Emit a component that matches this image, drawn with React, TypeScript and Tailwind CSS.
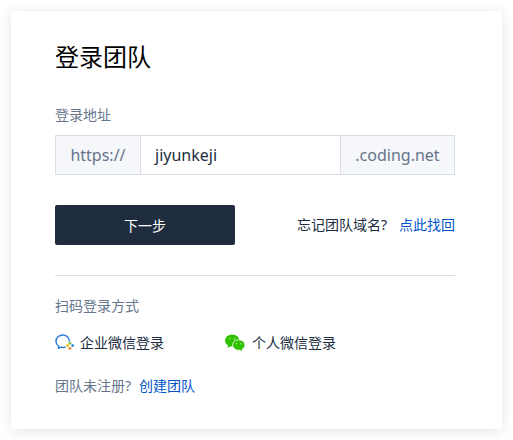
export default function App() {
  return (
    <div className="w-[513px] h-[440px] bg-white p-[11px] text-[14px] font-['Noto_Sans','Noto_Sans_CJK_SC',sans-serif] text-[#202d40]">
      <div className="w-[491px] h-[418px] bg-white pl-[44px] pr-[47px] pt-[28px] shadow-[0_2px_12px_rgba(32,45,64,0.12)]">
        <h1 className="text-[24px] leading-[36px] font-normal text-black">登录团队</h1>
        <div className="mt-[30px] h-[20px] leading-[20px] text-[#66758c]">登录地址</div>
        <div className="mt-[10px] flex h-[40px] w-[400px] border border-[#dadfe6] text-[16px] leading-[38px]">
          <div className="w-[85px] shrink-0 border-r border-[#dadfe6] bg-[#f5f7fa] text-center text-[#66758c]">https://</div>
          <div className="flex-1 pl-[14px] text-[#202d40]">jiyunkeji</div>
          <div className="w-[114px] shrink-0 border-l border-[#dadfe6] bg-[#f5f7fa] text-center text-[#66758c]">.coding.net</div>
        </div>
        <div className="mt-[30px] flex h-[40px] items-center justify-between">
          <button className="h-[40px] w-[180px] rounded-[2px] bg-[#202d40] text-white">下一步</button>
          <div className="flex gap-[12px] pb-[2px]">
            <span className="text-[#202d40]">忘记团队域名?</span>
            <a className="text-[#0055cc]">点此找回</a>
          </div>
        </div>
        <div className="mt-[30px] h-px bg-[#dadfe6]" />
        <div className="mt-[20px] h-[20px] leading-[20px] text-[#66758c]">扫码登录方式</div>
        <div className="mt-[16px] flex h-[20px] items-center">
          <div className="flex w-[170px] items-center">
            <svg width="20" height="18" viewBox="0 0 20 18" fill="none" className="mr-[5px]">
              <path d="M14.300 8C14.300 4.500 11.300 2 7.800 2 4 2 1 4.700 1 8.200 1 10.300 2 11.900 3.600 13L3.400 15.200 6.200 14.100C7.300 14.500 9 14.600 10.300 14.100" stroke="#2b7fd8" strokeWidth="1.500" strokeLinecap="round" strokeLinejoin="round" />
              <rect x="11.400" y="11.200" width="2.600" height="2.600" rx=".6" transform="rotate(45 12.700 12.500)" fill="#f5c518" />
              <rect x="13.700" y="8.800" width="2.600" height="2.600" rx=".6" transform="rotate(45 15 10.100)" fill="#7cc242" />
              <rect x="16.300" y="11.200" width="2.600" height="2.600" rx=".6" transform="rotate(45 17.600 12.500)" fill="#3a9be8" />
              <rect x="13.700" y="14" width="2.600" height="2.600" rx=".6" transform="rotate(45 15 15.300)" fill="#f08030" />
            </svg>
            <span>企业微信登录</span>
          </div>
          <div className="flex items-center">
            <svg width="20" height="17" viewBox="0 0 20 17" className="mr-[7px]">
              <ellipse cx="7.200" cy="6.500" rx="7.200" ry="6" fill="#2dc100" />
              <path d="M3 10.500 L2.800 14 L6.500 11.800Z" fill="#2dc100" />
              <ellipse cx="13.800" cy="11" rx="6.200" ry="5.200" fill="#2dc100" stroke="#fff" strokeWidth=".8" />
              <path d="M16.500 14.500 L17.200 17 L14.500 15.800Z" fill="#2dc100" />
              <circle cx="4.800" cy="4.800" r=".8" fill="#fff" fillOpacity=".7" />
              <circle cx="9.500" cy="4.800" r=".8" fill="#fff" fillOpacity=".7" />
              <circle cx="11.800" cy="9.800" r=".7" fill="#fff" fillOpacity=".7" />
              <circle cx="15.800" cy="9.800" r=".7" fill="#fff" fillOpacity=".7" />
            </svg>
            <span>个人微信登录</span>
          </div>
        </div>
        <div className="mt-[24px] flex h-[20px] gap-[8px] leading-[20px]">
          <span className="text-[#66758c]">团队未注册?</span>
          <a className="text-[#0055cc]">创建团队</a>
        </div>
      </div>
    </div>
  );
}
